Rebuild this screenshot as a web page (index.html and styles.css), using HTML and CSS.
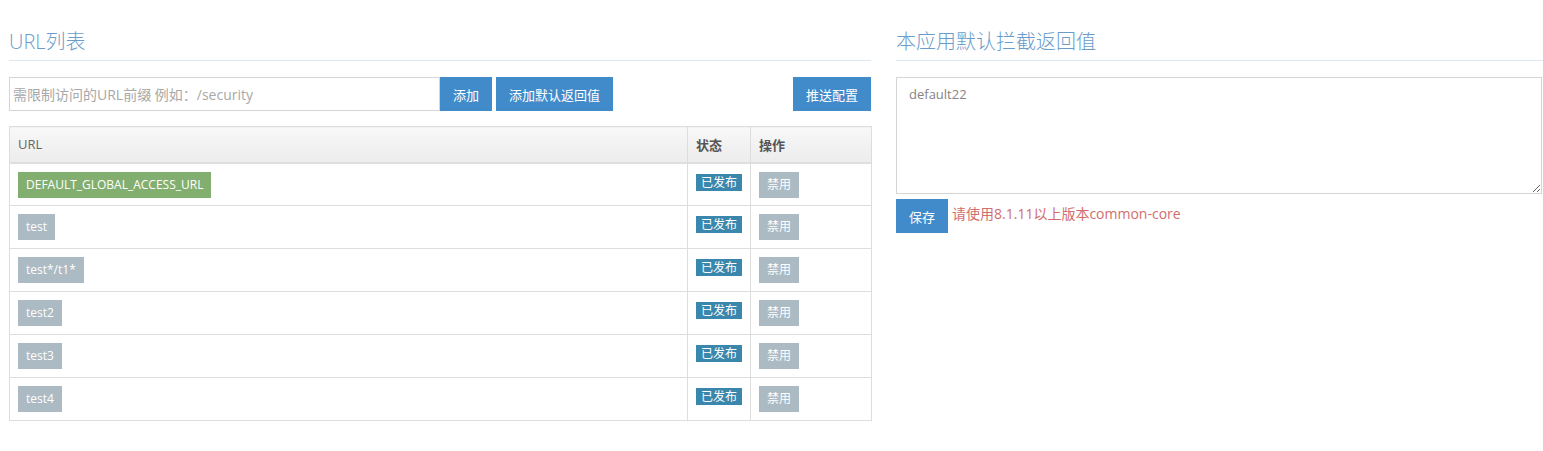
FILE: index.html
```html
<!DOCTYPE html>
<html lang="zh">
<head>
<meta charset="utf-8">
<title>URL列表</title>
<link rel="stylesheet" href="styles.css">
</head>
<body>
<div class="page">
  <section class="col-left">
    <h3 class="header">URL列表</h3>
    <div class="toolbar">
      <div class="add-group">
        <input class="url-input" type="text" placeholder="需限制访问的URL前缀 例如：/security">
        <button class="btn">添加</button>
        <button class="btn btn-gap">添加默认返回值</button>
      </div>
      <button class="btn">推送配置</button>
    </div>
    <table class="grid">
      <thead>
        <tr>
          <th class="c-url">URL</th>
          <th class="c-state bold">状态</th>
          <th class="c-op bold">操作</th>
        </tr>
      </thead>
      <tbody>
        <tr>
          <td><span class="tag tag-green">DEFAULT_GLOBAL_ACCESS_URL</span></td>
          <td><span class="pub">已发布</span></td>
          <td><span class="mini">禁用</span></td>
        </tr>
        <tr>
          <td><span class="tag">test</span></td>
          <td><span class="pub">已发布</span></td>
          <td><span class="mini">禁用</span></td>
        </tr>
        <tr>
          <td><span class="tag">test*/t1*</span></td>
          <td><span class="pub">已发布</span></td>
          <td><span class="mini">禁用</span></td>
        </tr>
        <tr>
          <td><span class="tag">test2</span></td>
          <td><span class="pub">已发布</span></td>
          <td><span class="mini">禁用</span></td>
        </tr>
        <tr>
          <td><span class="tag">test3</span></td>
          <td><span class="pub">已发布</span></td>
          <td><span class="mini">禁用</span></td>
        </tr>
        <tr>
          <td><span class="tag">test4</span></td>
          <td><span class="pub">已发布</span></td>
          <td><span class="mini">禁用</span></td>
        </tr>
      </tbody>
    </table>
  </section>
  <section class="col-right">
    <h3 class="header">本应用默认拦截返回值</h3>
    <textarea class="ret-area">default22</textarea>
    <div class="save-row">
      <button class="btn">保存</button>
      <span class="warn">请使用8.1.11以上版本common-core</span>
    </div>
  </section>
</div>
</body>
</html>
```
FILE: styles.css
```css
* { box-sizing: border-box; }
body {
  margin: 0;
  background: #fff;
  font-family: "Open Sans", "Noto Sans CJK SC", sans-serif;
  font-size: 13px;
  color: #393939;
}
.page {
  display: flex;
  gap: 25px;
  padding: 28px 0 0 9px;
}
.col-left { width: 862px; flex: none; }
.col-right { width: 647px; flex: none; }
.header {
  margin: 0 0 16px;
  font-size: 20px;
  line-height: 28px;
  font-weight: 300;
  color: #6a9ccb;
  padding-bottom: 4px;
  border-bottom: 1px solid #dce8f1;
}
.toolbar {
  display: flex;
  justify-content: space-between;
  align-items: flex-start;
  margin-bottom: 15px;
}
.add-group { display: flex; }
.url-input {
  width: 431px;
  height: 34px;
  border: 1px solid #d5d5d5;
  padding: 0 3px;
  font-family: "Open Sans", "Noto Sans CJK SC", sans-serif;
  font-size: 14px;
  color: #555;
  outline: none;
}
.url-input::placeholder { color: #a8a8a8; }
.btn {
  height: 34px;
  border: 1px solid #428bca;
  background: #428bca;
  color: #fff;
  font-family: "Open Sans", "Noto Sans CJK SC", sans-serif;
  font-size: 13px;
  padding: 0 12px;
  cursor: pointer;
}
.btn-gap { margin-left: 4px; }
.grid {
  width: 862px;
  border-collapse: collapse;
  table-layout: fixed;
}
.grid th, .grid td {
  border: 1px solid #ddd;
  padding: 0 8px;
  text-align: left;
}
.grid th {
  height: 36px;
  background: linear-gradient(#f8f8f8, #ececec);
  color: #666;
  font-weight: normal;
  border-bottom: 2px solid #dedede;
}
.grid th.bold { font-weight: bold; color: #555; }
.c-url { width: 678px; }
.c-state { width: 63px; }
.c-op { width: 121px; }
.grid td {
  height: 43px;
  vertical-align: top;
  padding-top: 8px;
}
.tag {
  display: inline-block;
  height: 26px;
  line-height: 26px;
  padding: 0 8px;
  font-size: 12px;
  color: #fff;
  background: #abbac3;
}
.tag-green { background: #82af6f; }
.pub {
  display: inline-block;
  margin-top: 2px;
  height: 17px;
  line-height: 17px;
  padding: 0 5px;
  font-size: 12px;
  color: #fff;
  background: #3a87ad;
}
.mini {
  display: inline-block;
  height: 26px;
  line-height: 26px;
  padding: 0 8px;
  font-size: 12px;
  color: #fff;
  background: #abbac3;
}
.ret-area {
  display: block;
  width: 646px;
  height: 117px;
  border: 1px solid #d5d5d5;
  padding: 6px 12px;
  font-family: "Open Sans", "Noto Sans CJK SC", sans-serif;
  font-size: 13px;
  line-height: 20px;
  color: #858585;
  resize: vertical;
  outline: none;
}
.save-row {
  margin-top: 5px;
  display: flex;
  align-items: center;
  gap: 4px;
}
.warn {
  color: #d16e6c;
  font-size: 14px;
  margin-top: -6px;
}
```
